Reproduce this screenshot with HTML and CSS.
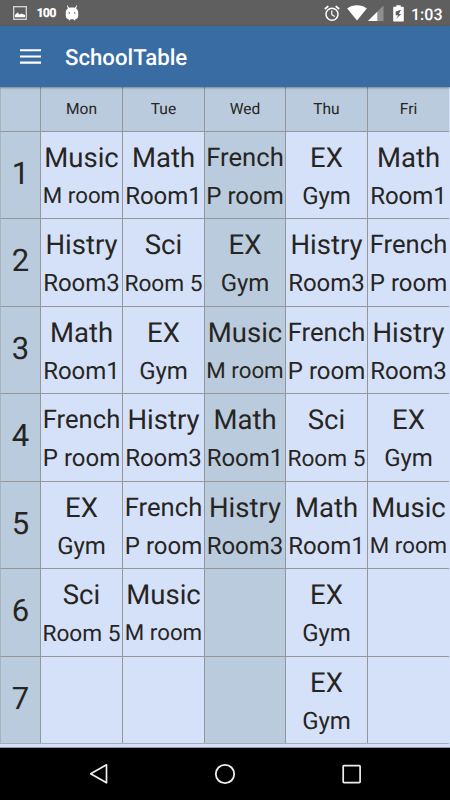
FILE: index.html
```html
<!DOCTYPE html>
<html lang="en">
<head>
<meta charset="utf-8">
<title>SchoolTable</title>
<link rel="stylesheet" href="styles.css">
</head>
<body>
<div class="status">
  <svg class="i-pic" width="14" height="14" viewBox="0 0 14 14"><rect x=".7" y=".7" width="12.6" height="12.6" fill="none" stroke="#d8d8d8" stroke-width="1.3"/><path d="M2 11.3V9l2.500-2.500 2.200 2 1.800-1L12 9v2.300z" fill="#fff"/></svg>
  <span class="pct">100</span>
  <svg class="i-bot" width="14" height="16" viewBox="0 0 14 16"><path d="M2.400.3l1.700 2.500C5 2.400 9 2.400 9.900 2.800L11.600.3l.5.3-1 3c1.500.9 2.100 2.200 2.100 4v3.200c0 2-.9 3.100-2.700 3.300l-.3 1.100H9l-.4-1H5.400l-.4 1H3.800l-.3-1.100C1.700 13.900.8 12.800.8 10.800V7.600c0-1.800.6-3.100 2.100-4l-1-3z" fill="#fff"/><circle cx="4.300" cy="8" r=".8" fill="#5f5f5f"/><circle cx="9.700" cy="8" r=".8" fill="#5f5f5f"/></svg>
  <span class="spacer"></span>
  <svg class="i-alarm" width="16" height="17" viewBox="0 0 16 17"><g fill="none" stroke="#fff"><circle cx="8" cy="9.300" r="6" stroke-width="1.500"/><path d="M.8 4L4.300 1.100M15.200 4L11.700 1.100" stroke-width="1.700"/><path d="M7.800 5.500v4.200l3 1.900" stroke-width="1.200"/></g></svg>
  <svg class="i-wifi" width="20" height="16" viewBox="0 0 20 16"><path d="M.2 3.400C5.500-.8 14.500-.8 19.800 3.400L10 15.600z" fill="#fff"/></svg>
  <svg class="i-cell" width="16" height="16" viewBox="0 0 16 16"><path d="M0 16L15.500.5V16z" fill="#8f8f8f"/><path d="M0 16L9.300 6.700V16z" fill="#fff"/></svg>
  <svg class="i-bat" width="11" height="17" viewBox="0 0 11 17"><path d="M3.300.3h4.400v1.500H10q.8 0 .8.8v13.200q0 .8-.8.8H1q-.8 0-.8-.8V2.600q0-.8.8-.8h2.300z" fill="#fff"/><path d="M8 4.700L2.700 6.600v3.700h2.500l-1.900 3.500 5-4.800H5.900z" fill="#5f5f5f"/></svg>
  <span class="clock">1:03</span>
</div>
<header class="bar">
  <svg class="menu" width="21" height="15" viewBox="0 0 21 15"><path d="M0 1.300h21M0 7.500h21M0 13.600h21" stroke="#fff" stroke-width="2.100"/></svg>
  <h1>SchoolTable</h1>
</header>
<main class="table">
  <div class="head"></div><div class="head">Mon</div><div class="head">Tue</div><div class="head">Wed</div><div class="head">Thu</div><div class="head">Fri</div>

  <div class="num">1</div>
  <div class="cell"><b>Music</b><i class="mroom">M room</i></div>
  <div class="cell"><b>Math</b><i>Room1</i></div>
  <div class="cell today"><b class="french">French</b><i>P room</i></div>
  <div class="cell"><b>EX</b><i>Gym</i></div>
  <div class="cell"><b>Math</b><i>Room1</i></div>

  <div class="num">2</div>
  <div class="cell"><b>Histry</b><i>Room3</i></div>
  <div class="cell"><b>Sci</b><i class="room5">Room 5</i></div>
  <div class="cell today"><b>EX</b><i>Gym</i></div>
  <div class="cell"><b>Histry</b><i>Room3</i></div>
  <div class="cell"><b class="french">French</b><i>P room</i></div>

  <div class="num">3</div>
  <div class="cell"><b>Math</b><i>Room1</i></div>
  <div class="cell"><b>EX</b><i>Gym</i></div>
  <div class="cell today"><b>Music</b><i class="mroom">M room</i></div>
  <div class="cell"><b class="french">French</b><i>P room</i></div>
  <div class="cell"><b>Histry</b><i>Room3</i></div>

  <div class="num">4</div>
  <div class="cell"><b class="french">French</b><i>P room</i></div>
  <div class="cell"><b>Histry</b><i>Room3</i></div>
  <div class="cell today"><b>Math</b><i>Room1</i></div>
  <div class="cell"><b>Sci</b><i class="room5">Room 5</i></div>
  <div class="cell"><b>EX</b><i>Gym</i></div>

  <div class="num">5</div>
  <div class="cell"><b>EX</b><i>Gym</i></div>
  <div class="cell"><b class="french">French</b><i>P room</i></div>
  <div class="cell today"><b>Histry</b><i>Room3</i></div>
  <div class="cell"><b>Math</b><i>Room1</i></div>
  <div class="cell"><b>Music</b><i class="mroom">M room</i></div>

  <div class="num">6</div>
  <div class="cell"><b>Sci</b><i class="room5">Room 5</i></div>
  <div class="cell"><b>Music</b><i class="mroom">M room</i></div>
  <div class="cell today"></div>
  <div class="cell"><b>EX</b><i>Gym</i></div>
  <div class="cell"></div>

  <div class="num">7</div>
  <div class="cell"></div>
  <div class="cell"></div>
  <div class="cell today"></div>
  <div class="cell"><b>EX</b><i>Gym</i></div>
  <div class="cell"></div>
</main>
<div class="strip"></div>
<nav class="nav">
  <svg width="20" height="22" viewBox="0 0 20 22"><path d="M17.500 1.800v18L1.700 10.800z" fill="none" stroke="#eee" stroke-width="1.700" stroke-linejoin="round"/></svg>
  <svg class="home" width="22" height="22" viewBox="0 0 22 22"><circle cx="11" cy="11" r="9.200" fill="none" stroke="#eee" stroke-width="1.800"/></svg>
  <svg width="20" height="20" viewBox="0 0 20 20"><rect x="1.200" y="1.700" width="16.900" height="16.900" rx=".8" fill="none" stroke="#eee" stroke-width="1.700"/></svg>
</nav>
</body>
</html>
```
FILE: styles.css
```css
* { box-sizing: border-box; }
body {
  margin: 0;
  width: 450px;
  height: 800px;
  display: flex;
  flex-direction: column;
  overflow: hidden;
  background: #d5e1f9;
  color: #272522;
  font-family: Roboto, sans-serif;
  text-rendering: geometricPrecision;
}
svg { display: block; flex: none; }
.status {
  height: 26px;
  flex: none;
  display: flex;
  align-items: center;
  padding: 0 8px 0 13px;
  background: #5f5f5f;
  color: #fff;
}
.pct { width: 19px; margin: 1px 9px 0 9.500px; font-size: 12.5px; font-weight: 900; letter-spacing: -0.9px; }
.spacer { flex: 1; }
.i-wifi { margin-left: 7px; }
.i-cell { margin-left: 1px; }
.i-bat { margin: 0 7px 0 9px; }
.clock { width: 31px; margin-top: 3px; font-size: 16px; font-weight: 500; line-height: 20px; white-space: nowrap; }
.bar {
  height: 61px;
  flex: none;
  display: flex;
  align-items: center;
  padding-left: 20px;
  background: #386ca3;
  color: #fff;
  box-shadow: 0 1px 2px rgba(0, 0, 0, .35);
  position: relative;
}
.bar h1 { margin: 3px 0 0 24px; font-size: 22.2px; font-weight: 500; line-height: 28px; }
.table {
  flex: none;
  display: grid;
  width: 449px;
  grid-template-columns: 40px 82px 82px 81px 82px 82px;
  grid-template-rows: 44px 87px 88px 87px 88px 87px 88px 87px;
  border-right: 1px solid #aab2bf;
  border-bottom: 1px solid #a6adb9;
}
.head, .num, .cell { border-left: 1px solid #949699; border-top: 1px solid #949699; min-width: 0; }
.head:first-child, .num { border-left-color: #a9b3be; }
.head {
  border-top: 0;
  background: #b9cbdd;
  text-align: center;
  font-size: 15.5px;
  line-height: 45px;
}
.num { background: #b9cbdd; text-align: center; font-size: 31px; line-height: 84px; }
.cell {
  display: flex;
  flex-direction: column;
  align-items: center;
  padding-top: 6px;
  background: #d5e1f9;
  white-space: nowrap;
}
.today { background: #b9cbdd; }
.cell b { font-size: 27.5px; font-weight: 400; line-height: 40px; }
.cell i { font-size: 24px; font-weight: 400; font-style: normal; line-height: 36px; }
.cell .french { font-size: 25.6px; }
.cell .mroom { font-size: 22.3px; line-height: 37px; }
.cell .room5 { font-size: 22.7px; line-height: 37px; }
.strip { flex: none; height: 4px; border-bottom: 1px solid #8f99a9; }
.nav {
  flex: 1;
  display: flex;
  align-items: center;
  justify-content: space-between;
  padding: 0 88px 0 89px;
  background: #000;
}
.home { margin-right: 1px; }
```
